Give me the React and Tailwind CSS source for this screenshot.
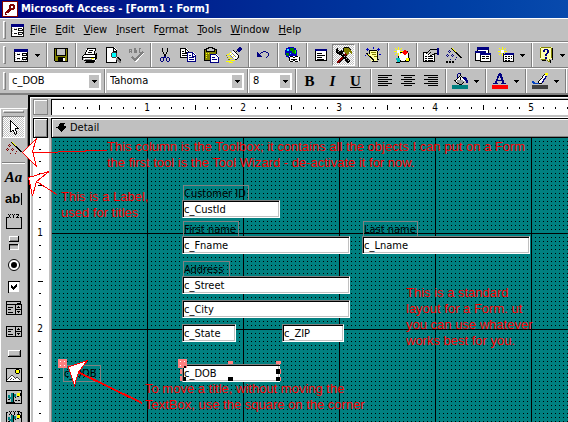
import React from "react";

const UI = "font-['DejaVu_Sans_Condensed','Tahoma','Open_Sans',sans-serif]";

function Icon({ children, w = 16, h = 16 }) {
  return (
    <svg width={w} height={h} viewBox={`0 0 ${w} ${h}`} shapeRendering="crispEdges" fill="none" aria-hidden="true">
      {children}
    </svg>
  );
}

/* ---------- toolbar drawings ---------- */

const FormIcon = ({ w = 14 }) => (
  <svg width={w} height="13" viewBox="0 0 14 13" shapeRendering="crispEdges" fill="none" aria-hidden="true">
    <path d="M0 0h14v13H0z" fill="#fff" />
    <path d="M1 4h1M3 4h1M5 4h1M1 6h1M1 8h1M1 10h1M3 10h1M5 10h1M7 11h1M9 11h1M11 11h1" stroke="#c0c0c0" />
    <path d="M0 0h14v3H0z" fill="#000080" />
    <path d="M0.5 3v9.5h13V3" stroke="#000" />
    <path d="M3 5.5h3M3 9.5h3M8 4.500h4v2H8zM8 8.500h4v2H8z" stroke="#000" />
  </svg>
);

const Caret = () => (
  <Icon w={5} h={3}>
    <path d="M0 0h5v1H0zM1 1h3v1H1zM2 2h1v1H2z" fill="#000" />
  </Icon>
);

const SaveIcon = () => (
  <Icon>
    <path d="M1 1h14v14H2L1 14z" fill="#808000" />
    <path d="M1.500 1.500h13v13h-12l-1-1z" stroke="#000" />
    <path d="M4 2h8v6H4z" fill="#c0c0c0" />
    <path d="M3.500 2v6.500h9V2" stroke="#000" />
    <path d="M5 10h7v4H5z" fill="#000" />
    <path d="M10 11h2v3h-2z" fill="#fff" />
  </Icon>
);

const PrintIcon = () => (
  <Icon>
    <path d="M5 1h9l-2 6H3z" fill="#fff" />
    <path d="M5 1.500h9M5.500 1v2M4.500 3v2M3.500 5v2M13.500 2v2M12.500 4v3M7 3.500h4M6 5.500h4" stroke="#000" />
    <path d="M1 8h13v6H2z" fill="#fff" />
    <path d="M2 7.500h12M0.500 9v4M1 8.500h1M2 13.500h11M1 10.500h12M14.500 6v6M13.500 8v5M3 15.500h9M4 14.500h9" stroke="#000" />
    <path d="M3 12h7v1H3z" fill="#808080" />
    <path d="M9 11h3v1H9z" fill="#ff0" />
  </Icon>
);

const PreviewIcon = () => (
  <Icon>
    <path d="M1 0h8l3 3v12H1z" fill="#fff" />
    <path d="M1.500 0.500h7l3 3V6M1.500 0v15M1 15.500h10M11.500 13v3M8.500 1v3h3" stroke="#000" />
    <path d="M7 6h4v4H7z" fill="#00ffff" />
    <path d="M7 5.500h4M7 10.500h4M6.500 6v4M11.500 6v4" stroke="#404040" />
    <path d="M11 11h2v1h1v1h1v1h1v2h-2v-1h-1v-1h-1v-1h-1z" fill="#808080" />
    <path d="M12 10h1v1h1v1h1v1h1v1" stroke="#000" />
  </Icon>
);

const SpellIcon = () => (
  <Icon>
    <path d="M1.500 6V2h2v4M1 4.500h3M6.500 6V1.500h1v4h1v-2h-1M13 1.500h-2v4h2" stroke="#808080" />
    <path d="M5 11l3 3 7-8" stroke="#fff" strokeWidth="2" />
    <path d="M4 10l3 3 8-8" stroke="#808080" strokeWidth="2" />
  </Icon>
);

const CutIcon = () => (
  <Icon>
    <path d="M5.500 1v4M6.500 5v2M7.500 7v2M10.500 1v4M9.500 5v2M8.500 7v2" stroke="#000" />
    <path d="M7.500 9v2M8.500 9v2M4 10.500h3M3.500 11v3M4 14.500h2M6.500 11v3M10 10.500h2M9.500 11v3M10 14.500h2M12.500 11v3" stroke="#000080" />
  </Icon>
);

const Page = ({ x, y, c }) => (
  <g>
    <path d={`M${x} ${y}h6l3 3v7h-9z`} fill="#fff" />
    <path d={`M${x + 0.5} ${y + 0.5}h5l3 3v6h-8z M${x + 5.5} ${y + 1}v3h3`} stroke={c} />
    <path d={`M${x + 2} ${y + 3.5}h2M${x + 2} ${y + 5.5}h5M${x + 2} ${y + 7.5}h5`} stroke={c} />
  </g>
);

const CopyIcon = () => (
  <Icon>
    <Page x={0} y={1} c="#000" />
    <Page x={7} y={5} c="#000080" />
  </Icon>
);

const PasteIcon = () => (
  <Icon>
    <path d="M1 3h12v11H1z" fill="#808000" />
    <path d="M1.500 2.500h12v11h-12z" stroke="#000" />
    <path d="M5 1h5v1h1v3H4V2h1z" fill="#c0c0c0" />
    <path d="M5.500 0.500h4v1h2v3h-8v-3h2z" stroke="#000" />
    <path d="M3 6h1v1H3zM5 6h1v1H5zM3 8h1v1H3zM3 10h1v1H3z" fill="#ff0" />
    <path d="M7 7h6l3 3v6H7z" fill="#fff" />
    <path d="M7.500 7.500h5l3 3v5h-8zM9 10.500h3M9 12.500h5" stroke="#000080" />
  </Icon>
);

const BrushIcon = () => (
  <Icon>
    <path d="M13 0h2v1h1v2h-1v1h-1v1h-2V4h-1V2h1V1h1z" fill="#000080" />
    <path d="M6 4h2v1h2v2h2v3h-1v2H8v-1H6V9H4V6h2z" fill="#fff" />
    <path d="M7 3h1v1h1v1h1v1h1v1h1v1h1v1h-1V8h-1V7h-1V6H9V5H8V4H7zM12 9h1v2h-1zM11 11h1v1h-1zM9 12h2v1H9zM10 4h1v1h-1z" fill="#000" />
    <path d="M6 6h1v1h1v1h1v1h1v1H9V9H8V8H7V7H6zM4 8h1v1h1v1h1v1H6v-1H5V9H4z" fill="#808080" />
    <path d="M4 5h1v1H4zM3 6h1v1H3zM5 7h1v1H5zM7 9h1v1H7zM1 7h2v1H1zM2 9h2v1H2zM3 11h3v1H3zM5 13h4v1H5zM0 14h5v1H0zM3 15h4v1H3z" fill="#ff0" />
    <path d="M0 8h1v1H0zM1 10h1v1H1zM2 12h2v1H2z" fill="#808000" />
  </Icon>
);

const UndoIcon = () => (
  <Icon>
    <path d="M2 5h1v1h1v1h1v1h1v1h1v1H2z" fill="#000080" />
    <path d="M5 6h1v1H5zM6 5h2v1H6zM8 4h3v1H8zM11 5h2v1h-2zM13 6h1v3h-1zM12 9h1v1h-1zM11 10h1v1h-1z" fill="#000080" />
  </Icon>
);

const GlobeIcon = () => (
  <Icon>
    <path d="M4 0h6v1h2v2h1v6h-2v2H4v-1H2V8H1V3h1V1h2z" fill="#0000c0" />
    <path d="M6 1h4v2h2v4h-2V6H8V4H6zM2 6h3v3H3z" fill="#008000" />
    <path d="M3 2h2v2H3zM6 6h1v1H6z" fill="#00ffff" />
    <path d="M11 3h1v3h-1z" fill="#0f0" />
    <path d="M5 9h10v6H5z" fill="#fff" />
    <path d="M6 9.500h3M11 9.500h3M5.500 10v4M6 14.500h3M11 14.500h3M15.500 10v4M9.500 10v1M9.500 13v1M10.500 10v1M10.500 13v1M7 12.500h6" stroke="#000" />
  </Icon>
);

const ListIcon = () => (
  <Icon>
    <path d="M2 2h12v12H2z" fill="#fff" />
    <path d="M2.500 2.500h11v11h-11z" stroke="#000" />
    <path d="M2 2h12v2H2z" fill="#000080" />
    <path d="M4 6.500h5M4 8.500h8M4 10.500h5M4 12.500h7" stroke="#000" />
  </Icon>
);

const ToolsIcon = () => (
  <Icon>
    <path d="M1 14h1v-1h1v-1h1v-1h1v-1h1V9h1V8h1V7h1V6h2v2h-1v1H9v1H8v1H7v1H6v1H5v1H4v1H3v1H1z" fill="#800000" />
    <path d="M3 15h1v-1h1v-1h1v-1h1v-1h1v-1h1V9h1V8h1v1h-1v1H9v1H8v1H7v1H6v1H5v1H4v1H3z" fill="#000" />
    <path d="M1 1h1v2h1v1h2V3h1v1h1v3h1v1h1v1h1v1h1v1h1v1h1v1h1v2h-1v1h-2v-1h-1v-1h-1v-1H9v-1H8v-1H7v-1H6V9H5V8H3V7H1V6H0V2h1z" fill="#000" />
    <path d="M6 7h1v1H6zM8 9h1v1H8zM10 11h1v1h-1zM12 13h1v1h-1zM2 4h1v1H2z" fill="#c0c0c0" />
    <path d="M8 1h5v1h1v1h1v1h1v3h-1V6h-1V5h-1v2h-1v1h-1V7h-1V6H9V5H8z" fill="#808000" />
    <path d="M7 1h1v4H7zM8 0h5v1H8zM13 1h1v1h-1zM14 2h1v1h-1z" fill="#000" />
  </Icon>
);

const MagicIcon = () => (
  <Icon>
    <path d="M4 4h8v10H6z" fill="#ffffa0" />
    <path d="M4 3.500h8M4.500 4v3M12.500 4v9M7 14.500h6M13 12.500h1" stroke="#000" />
    <path d="M6 5.500h5M7 7.500h4M9 9.500h3" stroke="#808000" />
    <path d="M1 6h2v1h1v1h1v1h1v1h1v1h1v1h1v2H8v-1H7v-1H6v-1H5v-1H4V9H3V8H2V7H1z" fill="#000" />
    <path d="M3 7h1v1H3zM4 8h1v1H4z" fill="#ff0" />
    <path d="M2 1h1v3H2zM1 2h3v1H1zM13 1h1v3h-1zM12 2h3v1h-3zM8 0h1v2H8zM0 8h1v1H0zM14 7h2v1h-2z" fill="#0000c0" />
  </Icon>
);

const RelationsIcon = () => (
  <Icon>
    <path d="M5 6l8-2 2 7-4 3H5z" fill="#fff" />
    <path d="M6 5.500h3M13.500 4v2M14.500 6v6M4.500 9v2M6 14.500h6M6 13.500h1M11 13.500h1" stroke="#000" />
    <path d="M4 0h1v9H4zM0 4h9v1H0zM1 1h1v1H1zM2 2h1v1H2zM6 6h1v1H6zM7 1h1v1H7zM6 2h1v1H6zM2 6h1v1H2zM1 7h1v1H1z" fill="#ff0" />
    <path d="M3 3h3v3H3z" fill="#fff" />
    <path d="M10 3l3 1 1 2-3 2-3-2z" fill="#f00" />
    <path d="M2 11h4v4H3z" fill="#00c0c0" />
    <path d="M12 11h3v3h-3z" fill="#ff0" />
    <path d="M2 15.500h4M12 14.500h3M15.500 11v3" stroke="#000" />
  </Icon>
);

const PropertiesIcon = () => (
  <Icon>
    <path d="M1 5h11v10H1z" fill="#fff" />
    <path d="M0.500 5.500h11v9h-11z" stroke="#000" />
    <path d="M2 9.500h2M5 9.500h5M2 11.500h2M5 11.500h5M2 13.500h2M5 13.500h5" stroke="#000" />
    <path d="M3 6h1V5h1V4h1V3h1V2h7v4h-3v1H9v1H7V7H4z" fill="#c0c0c0" />
    <path d="M3 6h1v1H3zM4 5h1v1H4zM5 4h1v1H5zM6 3h1v1H6zM7 2h7v1H7zM5 7h1v1H5zM6 6h1v1H6zM7 5h1v1H7zM7 8h2v1H7zM9 7h2v1H9zM11 6h3v1h-3z" fill="#000" />
    <path d="M14 1h2v7h-2z" fill="#000080" />
  </Icon>
);

const WandIcon = ({ star = "#000080", dots = true }) => (
  <Icon>
    <path d="M5 1h2v1h1v1h1v1h1v1h1v1h1v1h1v1h1v1h1v1h1v1h-2v-1h-1V9h-1V8h-1V7h-1V6H9V5H8V4H7V3H6V2H5z" fill="#000" />
    <path d="M6 1h1v1H6zM7 2h1v1H7zM8 3h1v1H8zM9 4h1v1H9z" fill="#ff0" />
    <path d="M3 3h1v1H3zM2 4h1v1H2zM4 4h1v1H4zM3 5h1v1H3zM6 7h1v1H6zM5 8h1v1H5zM7 8h1v1H7zM6 9h1v1H6zM1 7h1v1H1zM0 8h1v1H0zM2 8h1v1H2zM1 9h1v1H1zM10 10h1v1h-1zM9 12h1v1H9zM4 12h1v1H4z" fill={star} />
    {dots && <path d="M0 14h2v2H0zM3 14h2v2H3zM6 14h2v2H6z" fill="#000" />}
  </Icon>
);

const DbWindowIcon = () => (
  <Icon>
    <path d="M2 0h12v8H2z" fill="#fff" />
    <path d="M2.500 0.500h11v7h-11z" stroke="#000" />
    <path d="M2 0h12v3H2z" fill="#000080" />
    <path d="M0 4h10v9H0z" fill="#fff" />
    <path d="M0.500 4.500h10v9h-10z" stroke="#000" />
    <path d="M0 4h11v2H0z" fill="#000080" />
    <path d="M5 6h11v8H5z" fill="#fff" />
    <path d="M5.500 6.500h10v8h-10zM7 9.500h3M11 9.500h3M7 11.500h3M11 11.500h3" stroke="#000" />
    <path d="M5 6h11v2H5z" fill="#000080" />
  </Icon>
);

const NewObjectIcon = () => (
  <Icon>
    <path d="M5 6h11v9H5z" fill="#fff" />
    <path d="M5.500 6.500h10v8h-10zM7 9.500h2M10 9.500h2M13 9.500h1M7 11.500h2M10 11.500h2M13 11.500h1M7 13.500h2M10 13.500h2" stroke="#000" />
    <path d="M5 6h11v2H5z" fill="#000080" />
    <path d="M4 0h1v9H4zM0 4h9v1H0zM1 1h1v1H1zM2 2h1v1H2zM7 1h1v1H7zM6 2h1v1H6zM2 6h1v1H2zM1 7h1v1H1zM6 6h1v1H6z" fill="#ff0" />
    <path d="M3 3h3v3H3z" fill="#fff" />
  </Icon>
);

const HelpIcon = () => (
  <Icon>
    <path d="M2 0h12v12h-2v3l-4-3H2z" fill="#ffffb0" />
    <path d="M3 0.500h10M2.500 1v10M13.500 1v10M3 12.500h5M11.500 12v3M10.500 14v1M9.500 13v1" stroke="#808000" />
    <path d="M14.500 1v12M4 13.500h4M12.500 13v3" stroke="#000" />
    <path d="M5 3h1v2H5zM6 2h4v1H6zM6 3h1v2H6zM9 3h2v3H9zM8 6h2v1H8zM7 7h2v2H7zM7 10h2v2H7z" fill="#000080" />
  </Icon>
);

const LINES = {
  left: [14, 10, 14, 10, 14, 10],
  center: [14, 8, 14, 8, 14, 8],
  right: [14, 10, 14, 10, 14, 10],
};
const AlignIcon = ({ kind }) => (
  <Icon>
    {LINES[kind].map((len, i) => {
      const x = kind === "left" ? 1 : kind === "center" ? 1 + (14 - len) / 2 : 15 - len;
      return <rect key={i} x={x} y={2 + i * 2} width={len} height="1" fill="#000" />;
    })}
  </Icon>
);

const FillIcon = () => (
  <Icon h={17}>
    <path d="M8 2h1v1h1v1h1v1h1v1h1v2h-1v1h-1v1h-1v1H7v-1H5V9H3V7h1V6h1V5h1V4h1V3h1z" fill="#fff" />
    <path d="M5 7h6v1h1v1h-1v1h-1v1H7v-1H5z" fill="#a0a0a0" />
    <path d="M8 1h1v2H8zM7 3h1v1H7zM6 4h1v1H6zM5 5h1v1H5zM4 6h1v1H4zM2 7h2v1H2zM3 8h1v1H3zM4 9h1v1H4zM5 10h2v1H5zM7 11h3v1H7zM10 10h1v1h-1zM11 9h1v1h-1zM9 3h1v1H9zM10 4h1v1h-1zM11 5h1v1h-1zM8 4h1v3H8z" fill="#000" />
    <path d="M6 0h3v1H6zM5 1h1v4H5zM11 4h3v1h1v2h1v3h-2V8h-1V7h-1V6h-1z" fill="#000080" />
    <path d="M0 12h16v4H0z" fill="#008080" />
  </Icon>
);

const FontColorIcon = () => (
  <Icon h={17}>
    <path d="M7 0h2v1h1v3h1v3h1v3h2v1H9v-1h1V8H5v2h1v1H1v-1h2V8h1V6h1V3h1V1h1zM7 3v2H6v2h3V5H8V3z" fill="#000080" fillRule="evenodd" />
    <path d="M0 12h16v4H0z" fill="#f00" />
  </Icon>
);

const LineColorIcon = () => (
  <Icon h={17}>
    <path d="M12 1h2v2h-1v3h-2v3H9v1H7V7h2V4h2V3h1z" fill="#fff" />
    <path d="M12 1h1v1h-1zM11 2h1v1h-1zM10 3h1v2h-1zM9 5h1v1H9zM8 6h1v1H8zM7 7h1v1H7zM6 8h1v3H6zM7 10h3v1H7z" fill="#000" />
    <path d="M14 2h1v2h-1zM13 3h1v3h-1zM12 5h1v2h-1zM11 6h1v3h-1zM10 8h1v2h-1z" fill="#000080" />
    <path d="M13 0h3v2h-1v1h-1V2h-1z" fill="#ff0" />
    <path d="M0 8h2v1h1v1h4v1H1v-1H0z" fill="#0040c0" />
    <path d="M0 12h16v4H0z" fill="#404040" />
  </Icon>
);

/* ---------- toolbox drawings ---------- */

const PointerIcon = () => (
  <Icon>
    <path d="M5 2h1v1h1v1h1v1h1v1h1v1h1v1h1v1H9v2h1v2h1v2h-1v-1H9v-2H8v-1H7v1H5z" fill="#fff" />
    <path d="M4.500 1v12M5 2.500h1M6 3.500h1M7 4.500h1M8 5.500h1M9 6.500h1M10 7.500h1M11 8.500h1M9 9.500h4M5 12.500h1M6 11.500h1M7.500 11v2M8.500 13v2M9.500 10v2M10.500 12v3M9 15.500h1" stroke="#000" />
  </Icon>
);

const FrameIcon = () => (
  <Icon>
    <path d="M2 4.500H0.500v11h15V4.500H14" stroke="#000" />
    <path d="M2 1h1v1H2zM3 2h1v2H3zM4 1h1v1H4zM2 4h1v1H2zM4 4h1v1H4zM6 1h1v1H6zM7 2h1v3H7zM8 1h1v1H8zM10 1h3v1h-3zM12 2h1v1h-1zM11 3h1v1h-1zM10 4h3v1h-3z" fill="#000" />
  </Icon>
);

const ToggleIcon = () => (
  <Icon>
    <path d="M3 1.500h9M3.500 1v5" stroke="#fff" />
    <path d="M3 6.500h10M12.500 1v6" stroke="#000" />
    <path d="M3 9.500h9M3.500 9v6" stroke="#000" />
    <path d="M4 14.500h9M12.500 9v6" stroke="#fff" />
    <path d="M4 10.500h8M4 5.500h8" stroke="#808080" />
  </Icon>
);

const RadioIcon = () => (
  <svg width="14" height="14" viewBox="0 0 14 14" aria-hidden="true">
    <circle cx="7" cy="7" r="5.500" fill="#fff" stroke="#000" />
    <circle cx="7" cy="7" r="3" fill="#000" />
  </svg>
);

const CheckIcon = () => (
  <Icon w={14} h={14}>
    <path d="M1 1h12v12H1z" fill="#fff" />
    <path d="M1.500 13V1.500H13" stroke="#000" />
    <path d="M2 12.500h11M12.500 2v11" stroke="#c0c0c0" />
    <path d="M4 5h1v1h1v1h1V6h1V5h1V4h1v3H9v1H8v1H7v1H6V9H5V8H4z" fill="#000" />
  </Icon>
);

const ListBoxIcon = ({ combo }) => (
  <Icon>
    {combo && <path d="M0 0.500h15M0.500 1v3M14.500 1v3" stroke="#000" />}
    {combo && <path d="M11 2h3v1h-3z" fill="#000" />}
    <path d="M0.500 3.500h15v10h-15zM9.500 4v9M2 6.500h5M2 8.500h3M2 11.500h5M10 8.500h5" stroke="#000" />
    <path d="M11 6h3v1h-3zM12 5h1v1h-1zM11 10h3v1h-3zM12 11h1v1h-1z" fill="#000" />
  </Icon>
);

const CommandIcon = () => (
  <Icon>
    <path d="M2 5.500h12M2.500 5v6" stroke="#fff" />
    <path d="M2 11.500h13M14.500 5v7" stroke="#000" />
    <path d="M3 10.500h11M13.500 6v5" stroke="#808080" />
  </Icon>
);

const ImageIcon = () => (
  <Icon>
    <path d="M0.500 1.500h15v13h-15z" stroke="#000" />
    <path d="M2 12h1v-1h1v-1h1V9h2v1h1v1h1v1h1v-1h2v1h1v1h1v1H1v-1h1z" fill="#fff" />
    <path d="M1 12h1v1H1zM2 11h1v1H2zM3 10h1v1H3zM4 9h1v1H4zM5 8h2v1H5zM7 9h1v1H7zM8 10h1v1H8zM9 11h1v1H9zM10 10h2v1h-2zM12 11h1v1h-1zM13 12h1v1h-1zM5 11h1v1H5zM4 12h1v1H4zM7 12h1v1H7z" fill="#404040" />
    <path d="M10 3h3v3h-3z" fill="#ff0" />
    <path d="M10 2.500h3M10 6.500h3M9.500 3v3M13.500 3v3" stroke="#000" />
  </Icon>
);

const BoundIcon = ({ xyz }) => (
  <Icon>
    <path d="M0.500 1.500h15v13h-15z" stroke="#000" />
    {xyz && <path d="M2 0h12v4H2z" fill="#c0c0c0" />}
    {xyz && <path d="M3 0h1v1H3zM4 1h1v2H4zM5 0h1v1H5zM3 3h1v1H3zM5 3h1v1H5zM7 0h1v1H7zM8 1h1v3H8zM9 0h1v1H9zM11 0h3v1h-3zM12 1h1v2h-1zM11 3h3v1h-3z" fill="#000" />}
    <path d="M5 4h2v9H5zM2 6h2v3H2zM2 8h3v2H3zM8 5h2v3H7V7h1z" fill="#008080" />
    <path d="M7.500 4v9M2 10.500h2M9 8.500h1M1 13.500h8" stroke="#000" />
    <path d="M11 4h3v3h-3z" fill="#ff0" />
    <path d="M11 7.500h2M14.500 4v3M9 11.500h2M12 11.500h2" stroke="#000" />
  </Icon>
);

/* ---------- building blocks ---------- */

function Sep() {
  return <span className="ml-[3px] mr-px h-full w-[2px] shrink-0 border-l border-r border-l-[#808080] border-r-white" />;
}

function Grip() {
  return <span className="ml-[3px] mr-[3px] h-[18px] w-[3px] shrink-0 border border-b-[#808080] border-l-white border-r-[#808080] border-t-white" />;
}

function Tool({ label, children, pressed }) {
  return (
    <button
      type="button"
      aria-label={label}
      className={
        "flex h-[22px] w-[23px] shrink-0 items-center justify-center " +
        (pressed
          ? "border border-b-white border-l-[#808080] border-r-white border-t-[#808080] bg-[repeating-conic-gradient(#fff_0_25%,#c0c0c0_0_50%)] bg-[length:2px_2px]"
          : "")
      }
    >
      {children}
    </button>
  );
}

function Drop({ label }) {
  return (
    <button type="button" aria-label={label} className="flex h-[22px] w-[11px] shrink-0 items-center justify-center">
      <Caret />
    </button>
  );
}

function Combo({ label, value, width }) {
  return (
    <div className={"relative h-[17px] shrink-0 " + width}>
      <select
        aria-label={label}
        defaultValue={value}
        className="h-full w-full appearance-none border border-white bg-white px-[2px] text-[11px] leading-[14px] text-black outline-none"
      >
        <option>{value}</option>
      </select>
      <span className="pointer-events-none absolute bottom-[2px] right-[2px] top-[2px] flex w-[10px] items-center justify-center bg-[#c0c0c0]">
        <Caret />
      </span>
    </div>
  );
}

const MENU = [
  ["F", "ile", ""],
  ["E", "dit", ""],
  ["V", "iew", ""],
  ["I", "nsert", ""],
  ["o", "rmat", "F"],
  ["T", "ools", ""],
  ["W", "indow", ""],
  ["H", "elp", ""],
];

const TICKS = ["dot", "dot", "dot", "bar", "dot", "dot", "dot", "num"];

/* Numbered inches, then one more run of bare ticks up to the window's edge. */
function Ruler({ count, vertical }) {
  const inches = Array.from({ length: count + 1 }, (_, i) => i + 1);
  return (
    <div className={"flex overflow-hidden bg-white " + (vertical ? "w-[15px] flex-col pt-[5px]" : "min-w-0 flex-1 border-l border-t border-black pl-[5px]")}>
      {inches.map((n) =>
        TICKS.map((t, i) => (
          <span
            key={n + "-" + i}
            className={"flex shrink-0 items-center justify-center text-[10px] leading-[12px] " + (vertical ? "h-[12px] w-[14px]" : "h-[15px] w-[12px]")}
          >
            {t === "num" && n <= count && n}
            {t === "dot" && <i className={"block bg-black " + (vertical ? "h-px w-[2px]" : "h-[2px] w-px")} />}
            {t === "bar" && <i className={"block bg-black " + (vertical ? "h-px w-[5px]" : "h-[5px] w-px")} />}
          </span>
        ))
      )}
    </div>
  );
}

const LABELS = [
  ["custId", "Customer ID", "left-[131px] top-[47px] w-[66px]"],
  ["fname", "First name", "left-[131px] top-[83px] w-[56px]"],
  ["lname", "Last name", "left-[311px] top-[83px] w-[55px]"],
  ["street", "Address", "left-[131px] top-[123px] w-[47px]"],
  ["dob", "c_DOB", "left-[11px] top-[227px] w-[38px]"],
];

const FIELDS = [
  ["custId", "c_CustId", "left-[130px] top-[62px] w-[98px]"],
  ["fname", "c_Fname", "left-[130px] top-[98px] w-[168px]"],
  ["lname", "c_Lname", "left-[310px] top-[98px] w-[168px]"],
  ["street", "c_Street", "left-[130px] top-[138px] w-[168px]"],
  ["city", "c_City", "left-[130px] top-[162px] w-[168px]"],
  ["state", "c_State", "left-[130px] top-[186px] w-[54px]"],
  ["zip", "c_ZIP", "left-[230px] top-[186px] w-[62px]"],
  ["dob", "c_DOB", "left-[130px] top-[226px] w-[98px]"],
];

function FormCanvas() {
  return (
    <div className="relative min-w-0 flex-1 overflow-hidden bg-[#008080]">
      <svg className="absolute inset-0 h-full w-full" shapeRendering="crispEdges" aria-hidden="true">
        <defs>
          <pattern id="dots" width="4" height="4" patternUnits="userSpaceOnUse">
            <rect x="3" y="3" width="1" height="1" fill="#000" />
          </pattern>
          <pattern id="inch" width="96" height="96" patternUnits="userSpaceOnUse">
            <path d="M95 0h1v96h-1zM0 95h96v1H0z" fill="#000" />
          </pattern>
        </defs>
        <rect width="100%" height="100%" fill="url(#dots)" />
        <rect width="100%" height="100%" fill="url(#inch)" />
      </svg>

      {LABELS.map(([id, text, pos]) => (
        <label
          key={id}
          htmlFor={id}
          className={"absolute h-[17px] whitespace-nowrap border border-[#808080] text-[11px] leading-[15px] text-black " + pos}
        >
          {text}
        </label>
      ))}

      {FIELDS.map(([id, text, pos]) => (
        <input
          key={id}
          id={id}
          type="text"
          aria-label={text}
          defaultValue={text}
          className={
            "absolute h-[18px] border border-b-white border-l-[#808080] border-r-white border-t-[#808080] bg-white pl-px text-[11px] leading-[14px] text-black shadow-[inset_1px_1px_0_#000,inset_-1px_-1px_0_#c0c0c0] outline-none " +
            pos
          }
        />
      ))}

      <svg className="pointer-events-none absolute left-0 top-0" width="240" height="260" shapeRendering="crispEdges" aria-hidden="true">
        <path d="M6 221h9v9H6zM126 221h9v9h-9zM176 223h5v3h-5zM224 223h5v3h-5zM128 231h2v5h-2zM128 238h2v5h-2zM228 231h1v5h-1zM228 239h1v4h-1z" fill="#ff8080" />
        <path d="M8 223h1v1H8zM12 223h1v1h-1zM8 227h1v1H8zM12 227h1v1h-1zM128 223h1v1h-1zM132 223h1v1h-1zM128 227h1v1h-1z" fill="#fff" />
        <path d="M176 239h5v4h-5zM224 231h4v5h-4zM224 239h4v4h-4zM132 228h2v2h-2zM132 239h2v4h-2zM225 227h3v1h-3z" fill="#000" />
      </svg>
    </div>
  );
}

const NOTE = "absolute whitespace-nowrap font-['Liberation_Sans',Arial,sans-serif] text-[13px] leading-[16px] text-[#f00] ";

function Annotations() {
  return (
    <div className="pointer-events-none absolute inset-0 overflow-hidden">
      <svg className="absolute inset-0 h-full w-full" shapeRendering="crispEdges" aria-hidden="true">
        <g fill="#fff" stroke="#f00">
          <path d="M22.500 152.500L36.500 138.500L32.500 151.500L36.500 166.500Z" />
          <path d="M28.500 177.500L49 171.500L36.500 181.500L32.500 196Z" />
          <path d="M87.500 360.500L68.500 367L74.500 385.500L78.500 372Z" />
        </g>
        <path d="M32 152.500L85 151.500V150.500H107M36.500 181.500L57 194.500M78 372.500L142 403.500M78 371.500L142 402.500" stroke="#f00" fill="none" />
      </svg>
      <p className={NOTE + "left-[107px] top-[139px]"}>
        This column is the Toolbox; it contains all the objects I can put on a Form
        <br />
        the first tool is the Tool Wizard - de-activate it for now.
      </p>
      <p className={NOTE + "left-[61px] top-[189px]"}>
        This is a Label,
        <br />
        used for titles
      </p>
      <p className={NOTE + "left-[406px] top-[285px]"}>
        This is a standard
        <br />
        layout for a Form. ut
        <br />
        you can use whatever
        <br />
        works best for you.
      </p>
      <p className={NOTE + "left-[145px] top-[381px]"}>
        To move a title, without moving the
        <br />
        TextBox, use the square on the corner
      </p>
    </div>
  );
}

export default function App() {
  return (
    <div className={"relative flex h-screen w-full flex-col overflow-hidden bg-[#c0c0c0] text-[11px] text-black " + UI}>
      <header className="flex h-[18px] shrink-0 items-center gap-[3px] bg-linear-to-r from-[#000080] to-[#084aad] pl-[2px]">
        <Icon>
          <path d="M0 0h16v16H0z" fill="#fff" />
          <path d="M0.500 0.500h15v15h-15z" stroke="#800000" />
          <path d="M8 3h4v1h1v4h-1v1H9v1H8v1H7v1H5v2H3v-3h1v-1h1V9h1V8h1V4h1z" fill="#800000" />
          <path d="M9 5h2v2H9zM4 12h1v1H4z" fill="#fff" />
        </Icon>
        <h1 className="whitespace-nowrap text-[11px] font-bold leading-[18px] text-white">Microsoft Access - [Form1 : Form]</h1>
      </header>

      <nav className="flex h-[24px] shrink-0 items-center gap-px border-b border-t border-b-[#808080] border-t-white">
        <Grip />
        <span className="flex w-[15px] justify-center">
          <FormIcon w={13} />
        </span>
        {MENU.map(([key, rest, before]) => (
          <button key={key + rest} type="button" className="shrink-0 px-1 text-[11px] leading-[18px]">
            {before}
            <span className="underline">{key}</span>
            {rest}
          </button>
        ))}
      </nav>

      <div className="flex h-[26px] shrink-0 items-center border-b border-t border-b-[#808080] border-t-white">
        <Grip />
        <Tool label="View"><FormIcon /></Tool>
        <Drop label="View options" />
        <Sep />
        <Tool label="Save"><SaveIcon /></Tool>
        <Sep />
        <Tool label="Print"><PrintIcon /></Tool>
        <Tool label="Print Preview"><PreviewIcon /></Tool>
        <Tool label="Spelling"><SpellIcon /></Tool>
        <Sep />
        <Tool label="Cut"><CutIcon /></Tool>
        <Tool label="Copy"><CopyIcon /></Tool>
        <Tool label="Paste"><PasteIcon /></Tool>
        <Tool label="Format Painter"><BrushIcon /></Tool>
        <Sep />
        <Tool label="Undo"><UndoIcon /></Tool>
        <Sep />
        <Tool label="Insert Hyperlink"><GlobeIcon /></Tool>
        <Sep />
        <Tool label="Field List"><ListIcon /></Tool>
        <Tool label="Toolbox" pressed><ToolsIcon /></Tool>
        <Sep />
        <Tool label="AutoFormat"><MagicIcon /></Tool>
        <Sep />
        <Tool label="Code"><RelationsIcon /></Tool>
        <Sep />
        <Tool label="Properties"><PropertiesIcon /></Tool>
        <Tool label="Build"><WandIcon /></Tool>
        <Sep />
        <Tool label="Database Window"><DbWindowIcon /></Tool>
        <Tool label="New Object"><NewObjectIcon /></Tool>
        <Drop label="New Object options" />
        <Sep />
        <Tool label="Help"><HelpIcon /></Tool>
        <Drop label="More buttons" />
      </div>

      <div className="flex h-[26px] shrink-0 items-center border-b border-t border-b-[#808080] border-t-white">
        <Grip />
        <Combo label="Object" value="c_DOB" width="w-[92px]" />
        <span className="w-[2px]" />
        <Sep />
        <Combo label="Font" value="Tahoma" width="w-[137px]" />
        <Sep />
        <Combo label="Font Size" value="8" width="w-[42px]" />
        <Sep />
        <Tool label="Bold"><span className="font-['Liberation_Serif',serif] text-[15px] font-bold leading-[16px]">B</span></Tool>
        <Tool label="Italic"><span className="font-['Liberation_Serif',serif] text-[15px] font-bold italic leading-[16px]">I</span></Tool>
        <Tool label="Underline"><span className="font-['Liberation_Serif',serif] text-[15px] font-bold leading-[16px] underline">U</span></Tool>
        <Sep />
        <Tool label="Align Left"><AlignIcon kind="left" /></Tool>
        <Tool label="Center"><AlignIcon kind="center" /></Tool>
        <Tool label="Align Right"><AlignIcon kind="right" /></Tool>
        <Sep />
        <Tool label="Fill Color"><FillIcon /></Tool>
        <Drop label="Fill Color options" />
        <Sep />
        <Tool label="Font Color"><FontColorIcon /></Tool>
        <Drop label="Font Color options" />
        <Sep />
        <Tool label="Line Color"><LineColorIcon /></Tool>
        <Drop label="Line Color options" />
        <Sep />
      </div>

      <main className="flex min-h-0 flex-1 border-t border-[#808080]">
        <aside className="w-[28px] shrink-0 overflow-hidden pt-[13px]">
          <div className="flex flex-col items-center border-l border-r border-t border-l-white border-r-[#808080] border-t-white pr-px pt-px">
            <span className="mb-[3px] h-[3px] w-[21px] shrink-0 border border-b-[#808080] border-l-white border-r-[#808080] border-t-white" />
            <Tool label="Select Objects" pressed><PointerIcon /></Tool>
            <Tool label="Control Wizards"><WandIcon star="#800000" dots={false} /></Tool>
            <span className="my-[2px] h-[2px] w-[23px] shrink-0 border-b border-t border-b-white border-t-[#808080]" />
            <Tool label="Label"><span className="font-['Liberation_Serif',serif] text-[15px] font-bold italic leading-[16px]">Aa</span></Tool>
            <Tool label="Text Box"><span className="border-r border-black pr-px font-['Liberation_Sans',sans-serif] text-[13px] font-bold leading-[12px]">ab</span></Tool>
            <Tool label="Option Group"><FrameIcon /></Tool>
            <Tool label="Toggle Button"><ToggleIcon /></Tool>
            <Tool label="Option Button"><RadioIcon /></Tool>
            <Tool label="Check Box"><CheckIcon /></Tool>
            <Tool label="Combo Box"><ListBoxIcon combo /></Tool>
            <Tool label="List Box"><ListBoxIcon /></Tool>
            <Tool label="Command Button"><CommandIcon /></Tool>
            <Tool label="Image"><ImageIcon /></Tool>
            <Tool label="Unbound Object Frame"><BoundIcon /></Tool>
            <Tool label="Bound Object Frame"><BoundIcon xyz /></Tool>
          </div>
        </aside>

        <section className="flex min-w-0 flex-1 flex-col border-l-2 border-t-2 border-black">
          <div className="flex min-h-0 flex-1 flex-col border-l border-t border-white pl-[2px] pt-px">
            <div className="flex h-[16px] shrink-0 gap-[3px]">
              <span className="w-[15px] shrink-0 border border-[#808080] shadow-[inset_1px_1px_0_#fff]" />
              <Ruler count={5} />
            </div>
            <div className="mt-[2px] flex h-[21px] shrink-0 gap-[3px] border-t border-white">
              <span className="w-[15px] shrink-0 border border-black shadow-[inset_1px_1px_0_#fff,inset_-1px_-1px_0_#808080]" />
              <div className="flex flex-1 items-center gap-[3px] border-b border-l border-t border-black pl-[4px] shadow-[inset_1px_1px_0_#fff,inset_0_-1px_0_#808080]">
                <Icon w={11} h={10}>
                  <path d="M4 0h5v1h-1v2h2v2H9v1H8v1H7v1H6v1H5V8H4V7H3V6H2V5H0V4h2V3h1V1h1z" fill="#000" />
                </Icon>
                <span className="text-[11px] leading-[16px]">Detail</span>
              </div>
            </div>
            <div className="flex min-h-0 flex-1">
              <Ruler count={2} vertical />
              <span className="w-[4px] shrink-0 border-l border-r border-l-white border-r-[#808080]" />
              <FormCanvas />
            </div>
          </div>
        </section>
      </main>

      <Annotations />
    </div>
  );
}
